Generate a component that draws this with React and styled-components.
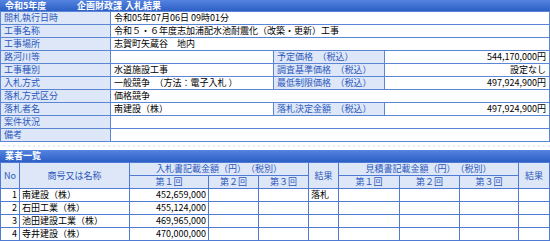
import React from "react";
import styled, { createGlobalStyle } from "styled-components";

const GlobalStyle = createGlobalStyle`
    html, body {
        margin: 0;
        padding: 0;
        background: #fff;
    }
    body {
        font-family: "Noto Sans CJK JP", "Noto Sans", sans-serif;
        font-size: 9px;
        color: #000;
    }
`

const Page = styled.div`
    width: 550px;
    display: flex;
    flex-direction: column;
`

const TitleBar = styled.div`
    height: ${(p) => p.h || 12}px;
    line-height: ${(p) => p.h || 12}px;
    background: linear-gradient(#5584e0, #2c5fc6);
    color: #fff;
    font-weight: bold;
    display: flex;
    padding-left: 5px;
    white-space: pre;
`

const TitlePart = styled.span`
    width: ${(p) => (p.w ? `${p.w}px` : "auto")};
`

const Table = styled.table`
    width: 100%;
    border-collapse: collapse;
    table-layout: fixed;
`

const Label = styled.td`
    background: #dde7f7;
    color: #2c58bd;
    border: 1px solid #5b86d6;
    height: 12px;
    line-height: 12px;
    padding: 0 3px;
    white-space: nowrap;
    text-align: ${(p) => p.align || "left"};
`

const Value = styled.td`
    background: #fff;
    border: 1px solid #5b86d6;
    height: 12px;
    line-height: 12px;
    padding: 0 3px;
    white-space: nowrap;
    text-align: ${(p) => p.align || "left"};
`

const Gap = styled.div`
    height: 8px;
    background: repeating-linear-gradient(90deg, #fff 0 3px, #e9eef9 3px 5px);
    background-size: 100% 2px;
    background-repeat: no-repeat;
    background-position: 0 3px;
`

const Cell = styled.td`
    border: 1px solid #4f7bd4;
    height: 12px;
    line-height: 12px;
    padding: 0 2px;
    white-space: nowrap;
    text-align: ${(p) => p.align || "left"};
`

const Head = styled.th`
    background: #dde7f7;
    color: #2c58bd;
    font-weight: normal;
    border: 1px solid #4f7bd4;
    height: 12px;
    line-height: 12px;
    padding: 0;
    white-space: nowrap;
    text-align: center;
`

const bidders = [
    { no: 1, name: "南建設（株）", first: "452,659,000", result: "落札" },
    { no: 2, name: "石田工業（株）", first: "455,124,000", result: "" },
    { no: 3, name: "池田建設工業（株）", first: "469,965,000", result: "" },
    { no: 4, name: "寺井建設（株）", first: "470,000,000", result: "" },
];

function App() {
    return (
        <Page>
            <GlobalStyle />
            <TitleBar h={11}>
                <TitlePart w={72}>令和5年度</TitlePart>
                <TitlePart w={48}>企画財政課</TitlePart>
                <TitlePart>入札結果</TitlePart>
            </TitleBar>
            <Table>
                <colgroup>
                    <col style={{ width: "110px" }} />
                    <col style={{ width: "163px" }} />
                    <col style={{ width: "111px" }} />
                    <col />
                </colgroup>
                <tbody>
                    <tr>
                        <Label>開札執行日時</Label>
                        <Value colSpan={3}>令和05年07月06日 09時01分</Value>
                    </tr>
                    <tr>
                        <Label>工事名称</Label>
                        <Value colSpan={3}>令和５・６年度志加浦配水池耐震化（改築・更新）工事</Value>
                    </tr>
                    <tr>
                        <Label>工事場所</Label>
                        <Value colSpan={3}>志賀町矢蔵谷　地内</Value>
                    </tr>
                    <tr>
                        <Label>路河川等</Label>
                        <Value></Value>
                        <Label>予定価格　（税込）</Label>
                        <Value align="right">544,170,000円</Value>
                    </tr>
                    <tr>
                        <Label>工事種別</Label>
                        <Value>水道施設工事</Value>
                        <Label>調査基準価格　（税込）</Label>
                        <Value align="right">設定なし</Value>
                    </tr>
                    <tr>
                        <Label>入札方式</Label>
                        <Value>一般競争　（方法：電子入札 ）</Value>
                        <Label>最低制限価格　（税込）</Label>
                        <Value align="right">497,924,900円</Value>
                    </tr>
                    <tr>
                        <Label>落札方式区分</Label>
                        <Value colSpan={3}>価格競争</Value>
                    </tr>
                    <tr>
                        <Label>落札者名</Label>
                        <Value>南建設（株）</Value>
                        <Label>落札決定金額　（税込）</Label>
                        <Value align="right">497,924,900円</Value>
                    </tr>
                    <tr>
                        <Label>案件状況</Label>
                        <Value colSpan={3}></Value>
                    </tr>
                    <tr>
                        <Label>備考</Label>
                        <Value colSpan={3}></Value>
                    </tr>
                </tbody>
            </Table>
            <Gap />
            <TitleBar>業者一覧</TitleBar>
            <Table>
                <colgroup>
                    <col style={{ width: "19px" }} />
                    <col style={{ width: "110px" }} />
                    <col style={{ width: "79px" }} />
                    <col style={{ width: "50px" }} />
                    <col style={{ width: "50px" }} />
                    <col style={{ width: "30px" }} />
                    <col style={{ width: "61px" }} />
                    <col style={{ width: "60px" }} />
                    <col style={{ width: "59px" }} />
                    <col />
                </colgroup>
                <thead>
                    <tr>
                        <Head rowSpan={2}>No</Head>
                        <Head rowSpan={2}>商号又は名称</Head>
                        <Head colSpan={3}>入札書記載金額（円）　（税別）</Head>
                        <Head rowSpan={2}>結果</Head>
                        <Head colSpan={3}>見積書記載金額（円）　（税別）</Head>
                        <Head rowSpan={2}>結果</Head>
                    </tr>
                    <tr>
                        <Head>第１回</Head>
                        <Head>第２回</Head>
                        <Head>第３回</Head>
                        <Head>第１回</Head>
                        <Head>第２回</Head>
                        <Head>第３回</Head>
                    </tr>
                </thead>
                <tbody>
                    {bidders.map((b) => (
                        <tr key={b.no}>
                            <Cell align="right">{b.no}</Cell>
                            <Cell>{b.name}</Cell>
                            <Cell align="right">{b.first}</Cell>
                            <Cell></Cell>
                            <Cell></Cell>
                            <Cell>{b.result}</Cell>
                            <Cell></Cell>
                            <Cell></Cell>
                            <Cell></Cell>
                            <Cell></Cell>
                        </tr>
                    ))}
                </tbody>
            </Table>
        </Page>
    );
}

export default App;
